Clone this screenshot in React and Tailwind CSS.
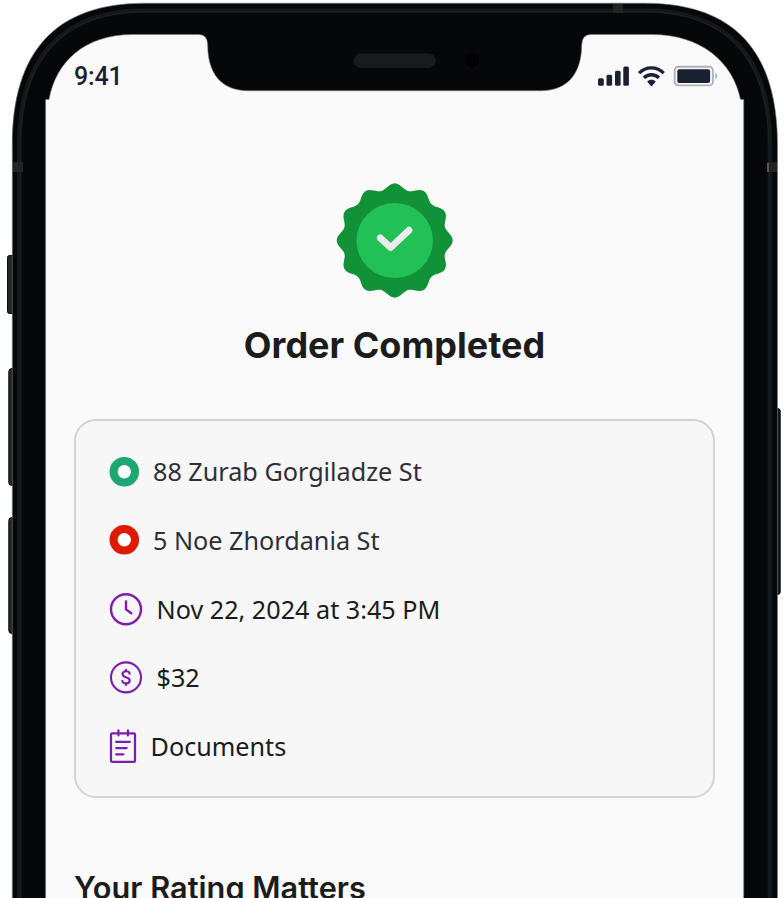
const sealPath = (() => {
  const points = [];
  for (let i = 0; i < 360; i += 2) {
    const a = (i * Math.PI) / 180;
    const r = 55 + 3 * Math.cos(12 * a);
    points.push(`${(58.7 + r * Math.cos(a)).toFixed(2)} ${(57.5 + r * 0.985 * Math.sin(a)).toFixed(2)}`);
  }
  return `M${points.join("L")}Z`;
})();

function SealIcon() {
  return (
    <svg width="117" height="115" viewBox="0 0 117 115">
      <path d={sealPath} fill="#129238" />
      <ellipse cx="58.7" cy="57.5" rx="38.2" ry="37.6" fill="#21c157" />
      <path d="M44.3 54.9L54.6 64.6L73 47.2" fill="none" stroke="#ececec" strokeWidth="6.8" strokeLinecap="round" strokeLinejoin="round" />
    </svg>
  );
}

function RingIcon({ color }) {
  return (
    <svg width="30" height="31" viewBox="0 0 30 31">
      <circle cx="15.3" cy="15.8" r="14.8" fill={color} />
      <circle cx="15.3" cy="15.8" r="6.7" fill="#fff" />
    </svg>
  );
}

function ClockIcon() {
  return (
    <svg width="34" height="34" viewBox="0 0 34 34" fill="none" stroke="#7f1cb0" strokeWidth="2.4" strokeLinecap="round" strokeLinejoin="round">
      <circle cx="17" cy="17.3" r="15" />
      <path d="M17 9.5V17.4L22.2 21.3" />
    </svg>
  );
}

function DollarIcon() {
  return (
    <svg width="34" height="34" viewBox="0 0 34 34" fill="none" stroke="#7f1cb0" strokeWidth="2.1" strokeLinecap="round" strokeLinejoin="round">
      <circle cx="17" cy="17.4" r="15" />
      <path d="M20.6 13.8C20.6 12.2 19.2 11.3 17 11.3C14.8 11.3 13.5 12.4 13.5 14.1C13.5 15.9 14.9 16.6 17 17.2C19.3 17.8 20.7 18.6 20.7 20.5C20.7 22.3 19.2 23.4 17 23.4C14.8 23.4 13.4 22.5 13.4 20.8M17 9.7V11.3M17 23.4V25.1" />
    </svg>
  );
}

function NotesIcon() {
  return (
    <svg width="28" height="36" viewBox="0 0 28 36" fill="none" stroke="#7f1cb0" strokeWidth="2.2" strokeLinecap="round" strokeLinejoin="round">
      <rect x="2" y="5.3" width="24" height="28.6" rx="1.2" />
      <path d="M9.4 2.3V7.5M18.9 2.3V7.5M7.2 13.9H20.8M7.2 20.1H17.7M7.2 26.3H14.4" />
    </svg>
  );
}

function StatusIcons() {
  return (
    <svg width="122" height="24" viewBox="597 64 122 24">
      <g fill="#1b2033">
        <rect x="598" y="78.3" width="5.8" height="7.5" rx="1.5" />
        <rect x="606.5" y="74.7" width="5.6" height="11.1" rx="1.5" />
        <rect x="615" y="70.8" width="5.6" height="15" rx="1.5" />
        <rect x="623.3" y="66.6" width="5.6" height="19.2" rx="1.5" />
        <path d="M651.4 86.4L647.2 81.7C649.4 79.1 653.5 79.1 655.7 81.7Z" />
        <rect x="677.3" y="69.2" width="32.8" height="13.7" rx="2" />
      </g>
      <path d="M639.1 73.1C645.8 66.2 657 66.2 663.7 73.1M643.9 77.8C648 73.7 654.8 73.7 658.9 77.8" fill="none" stroke="#1b2033" strokeWidth="3.3" />
      <rect x="674.7" y="66.8" width="38.2" height="18.6" rx="3.6" fill="none" stroke="#b0b2b9" strokeWidth="1.9" />
      <path d="M715.3 73.1C718 74 718 78.3 715.3 79.3Z" fill="#b0b2b9" />
    </svg>
  );
}

function DeviceFrame() {
  return (
    <svg className="pointer-events-none absolute inset-0" width="784" height="898" viewBox="0 0 784 898">
      <path d="M0 0H784V140H777.5C777.5 52 735 3.2 645 3.2H145C55 3.2 12.3 52 12.3 140H0Z" fill="#fff" />
      <g fill="#252527" stroke="#090b0d" strokeWidth="1">
        <rect x="7.5" y="255.5" width="10" height="58" rx="2" />
        <rect x="8.8" y="368.5" width="10" height="117" rx="3" />
        <rect x="8.8" y="517.5" width="10" height="116" rx="3" />
        <rect x="770" y="408.5" width="10.2" height="186" rx="2.5" fill="#17181b" />
      </g>
      <path
        fillRule="evenodd"
        fill="#060708"
        stroke="#777a7b"
        strokeWidth=".6"
        d="M12.3 910V145C12.3 52 55 3.2 145 3.2H645C735 3.2 777.5 52 777.5 145V910ZM45.6 910V99.5H49C56 62 84 34.5 133 34.5H199Q207.5 34.5 207.7 45C207.7 72 220 90.7 248 90.7H541C569 90.7 581.5 72 581.7 45Q581.9 34.5 590.5 34.5H652C701 34.5 733 62 740.5 99.5H743.7V910Z"
      />
      <path d="M19.3 898V145C19.3 58 62 10.5 145 10.5H645C728 10.5 770 58 770 145V898" fill="none" stroke="#14181b" strokeWidth="4.6" />
      <path d="M20.4 898V145C20.4 60 62 11.8 145 11.8H645C727 11.8 769 60 769 145V898" fill="none" stroke="#1d2123" strokeWidth="1" />
      <path d="M13 162H23V172H13ZM767 162H777V172H767ZM613 4H623V13H613Z" fill="#222324" />
      <path d="M767 163H769V172H767Z" fill="#555654" />
      <rect x="353.7" y="53.5" width="82" height="14.4" rx="7.2" fill="#191a1c" />
      <circle cx="472" cy="60.5" r="14" fill="#06070b" />
      <circle cx="472" cy="60.5" r="8" fill="#010104" stroke="#080a18" strokeWidth="1.2" />
    </svg>
  );
}

const rows = [
  { icon: <RingIcon color="#1da773" />, text: "88 Zurab Gorgiladze St", style: "gap-[14px] text-[#2f2f39]" },
  { icon: <RingIcon color="#dc1b00" />, text: "5 Noe Zhordania St", style: "gap-[14px] text-[#2f2f39]" },
  { icon: <ClockIcon />, text: "Nov 22, 2024 at 3:45 PM", style: "gap-[13.5px] text-[#1c1c1c]" },
  { icon: <DollarIcon />, text: "$32", style: "gap-[13.5px] text-[#1c1c1c]" },
  { icon: <NotesIcon />, text: "Documents", style: "gap-[13.5px] text-[#1c1c1c]" },
];

export default function App() {
  return (
    <div className="relative h-[898px] w-[784px] overflow-hidden bg-white">
      <main className="ml-[45px] flex h-full w-[699px] flex-col bg-[#fafafa] px-[29px]">
        <header className="mt-[64px] flex h-6 items-center justify-between">
          <span className="pt-0.5 font-[Roboto,sans-serif] text-[25px] leading-6 font-medium tracking-[-0.2px] text-[#1b2033]">9:41</span>
          <div className="-mr-1 shrink-0"><StatusIcons /></div>
        </header>
        <section className="mt-[95px] flex flex-col items-center">
          <SealIcon />
          <h1 className="mt-[23px] font-[Inter,sans-serif] text-[36px] leading-[48px] font-bold text-[#1c1c1c] [font-optical-sizing:none]">Order Completed</h1>
        </section>
        <ul className="mt-[50px] flex h-[379px] w-[641px] shrink-0 flex-col rounded-[22px] border-2 border-[#d3d3d3] bg-[#f7f7f7] pt-[15.8px] pl-[33px]">
          {rows.map((row) => (
            <li key={row.text} className={`flex h-[68.7px] items-center font-['Noto_Sans',sans-serif] text-[25.2px] ${row.style}`}>
              {row.icon}
              <span className="leading-[34px]">{row.text}</span>
            </li>
          ))}
        </ul>
        <h2 className="mt-[70px] font-[Inter,sans-serif] text-[30.7px] leading-[40px] font-semibold whitespace-nowrap text-[#1c1c1c] [font-optical-sizing:none] [font-variant-ligatures:none]">Your Rating Matters</h2>
      </main>
      <DeviceFrame />
    </div>
  );
}
